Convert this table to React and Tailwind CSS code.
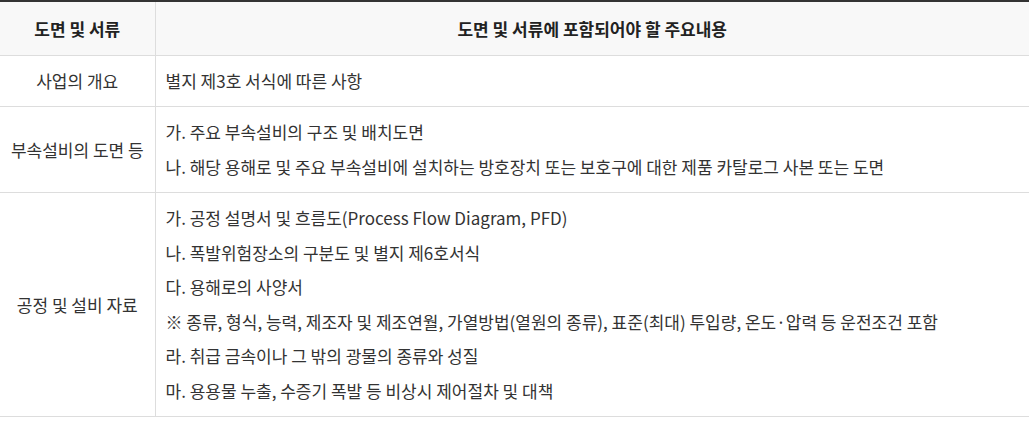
import React from "react";

const rows = [
  {
    label: "사업의 개요",
    items: ["별지 제3호 서식에 따른 사항"],
  },
  {
    label: "부속설비의 도면 등",
    items: [
      "가. 주요 부속설비의 구조 및 배치도면",
      "나. 해당 용해로 및 주요 부속설비에 설치하는 방호장치 또는 보호구에 대한 제품 카탈로그 사본 또는 도면",
    ],
  },
  {
    label: "공정 및 설비 자료",
    items: [
      "가. 공정 설명서 및 흐름도(Process Flow Diagram, PFD)",
      "나. 폭발위험장소의 구분도 및 별지 제6호서식",
      "다. 용해로의 사양서",
      "※ 종류, 형식, 능력, 제조자 및 제조연월, 가열방법(열원의 종류), 표준(최대) 투입량, 온도·압력 등 운전조건 포함",
      "라. 취급 금속이나 그 밖의 광물의 종류와 성질",
      "마. 용용물 누출, 수증기 폭발 등 비상시 제어절차 및 대책",
    ],
  },
];

export default function App() {
  return (
    <div className="bg-white min-h-screen font-['Noto_Sans_CJK_KR','Noto_Sans',sans-serif] text-[17px] text-[#333]">
      <table className="w-[1029px] border-collapse border-t-2 border-[#333] table-fixed">
        <colgroup>
          <col className="w-[155px]" />
          <col />
        </colgroup>
        <thead>
          <tr className="bg-[#f8f8f8]">
            <th className="h-[54px] border-b border-r border-[#ddd] font-bold text-[#222] text-center align-middle">
              도면 및 서류
            </th>
            <th className="h-[54px] border-b border-[#ddd] font-bold text-[#222] text-center align-middle">
              도면 및 서류에 포함되어야 할 주요내용
            </th>
          </tr>
        </thead>
        <tbody>
          {rows.map((row) => (
            <tr key={row.label}>
              <td className="border-b border-r border-[#ddd] text-center align-middle">
                {row.label}
              </td>
              <td className="border-b border-[#ddd] pl-[10px] pr-2 pt-[8px] pb-[8px] align-middle">
                {row.items.map((item) => (
                  <p key={item} className="leading-[34.5px] whitespace-nowrap">
                    {item}
                  </p>
                ))}
              </td>
            </tr>
          ))}
        </tbody>
      </table>
    </div>
  );
}
